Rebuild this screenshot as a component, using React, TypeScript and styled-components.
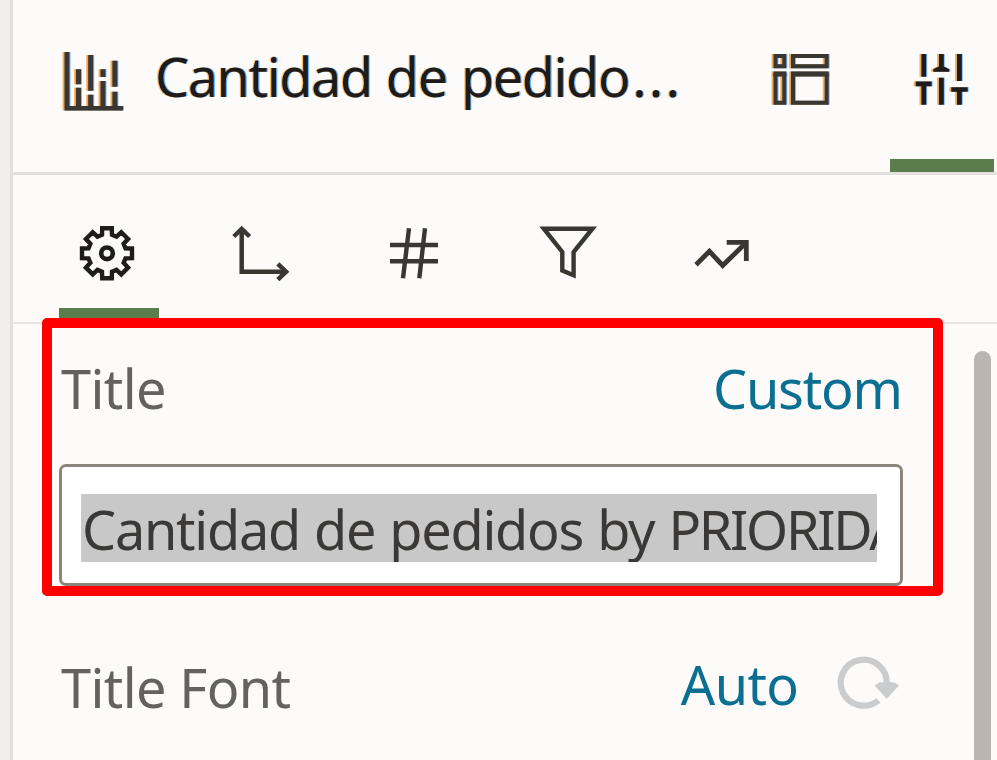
import React from "react";
import styled, { createGlobalStyle } from "styled-components";

const GlobalStyle = createGlobalStyle`
  html, body { margin: 0; padding: 0; }
  body { background: #fcfbfa; overflow: hidden; }
  * { box-sizing: border-box; }
`;

const Page = styled.div`
  position: relative;
  display: flex;
  width: 997px;
  height: 760px;
  overflow: hidden;
  background: #fcfbfa;
  font-family: "Noto Sans", "Open Sans", sans-serif;
  font-size: 54px;
  line-height: 74px;
  white-space: nowrap;
`;

const Gutter = styled.div`
  flex: none;
  width: 13px;
  background: #f0efee;
  border-right: 3px solid #e1e0df;
`;

const Panel = styled.main`
  flex: 1;
  display: flex;
  flex-direction: column;
  min-width: 0;
`;

const Header = styled.header`
  display: grid;
  grid-template-columns: 142px 594px 141px 107px;
  height: 175px;
  border-bottom: 3px solid #e2e1e0;
`;

const HeaderIcon = styled.div<{ $left: number }>`
  padding: 46px 0 0 ${(p) => p.$left}px;
`;

const HeaderTab = styled.div`
  display: flex;
  flex-direction: column;
  justify-content: space-between;
  width: 104px;
  padding-top: 46px;
`;

const HeaderTabIcon = styled.div`
  padding-left: 20px;
`;

const Underline = styled.div<{ $height: number }>`
  height: ${(p) => p.$height}px;
  background: #5b7d4b;
`;

const Heading = styled.h1`
  margin: 0;
  padding-top: 39px;
  font: inherit;
  color: #1d1b1c;
  letter-spacing: -1.4px;
  word-spacing: 1.5px;
  text-shadow: -1.2px 0 0.5px rgba(255, 150, 20, 0.65), 1.2px 0 0.5px rgba(20, 140, 255, 0.65);
`;

const Ellipsis = styled.span`
  padding-left: 3px;
  letter-spacing: 2.2px;
`;

const Tabs = styled.nav`
  display: flex;
  gap: 53px;
  height: 149px;
  padding-left: 46px;
  border-bottom: 2px solid #e6e5e4;
`;

const Tab = styled.div`
  display: flex;
  flex-direction: column;
  justify-content: space-between;
  width: 100px;
  padding-top: 43px;
`;

const TabIcon = styled.div`
  display: flex;
  justify-content: center;
`;

const Glyph = styled.svg<{ $fringe?: boolean }>`
  display: block;
  overflow: visible;
  filter: ${(p) =>
    p.$fringe
      ? "drop-shadow(-1.3px 0 0.3px rgba(255,150,30,.7)) drop-shadow(1.3px 0 0.3px rgba(40,140,255,.6))"
      : "none"};
`;

const Body = styled.div`
  flex: 1;
  display: flex;
  justify-content: space-between;
  padding: 27px 6px 0 46px;
`;

const Form = styled.section`
  width: 844px;
`;

const Row = styled.div`
  display: flex;
  justify-content: space-between;
  height: 113px;
`;

const Label = styled.span`
  padding-left: 2px;
  color: #64615e;
  letter-spacing: -0.6px;
`;

const Value = styled.span<{ $track: number }>`
  margin-right: ${(p) => -p.$track}px;
  color: #0a6f91;
  letter-spacing: ${(p) => p.$track}px;
`;

const Field = styled.div`
  height: 122px;
  padding: 27px 23px 0 19px;
  border: 3px solid #8c857d;
  border-radius: 7px;
  background: #fff;
`;

const Selected = styled.div`
  height: 68px;
  line-height: 70px;
  padding-left: 1px;
  overflow: hidden;
  background: #c8c8c8;
  color: #3a3937;
  letter-spacing: -1.25px;
  word-spacing: 1.3px;
`;

const Capitals = styled.span`
  letter-spacing: -2.3px;
`;

const FontRow = styled.div`
  display: flex;
  justify-content: space-between;
  padding-top: 64px;
`;

const FontValue = styled.div`
  display: flex;
  gap: 38px;
  margin-top: -3px;
  padding-right: 4px;
`;

const ResetIcon = styled.div`
  padding-top: 8px;
`;

const Scrollbar = styled.div`
  width: 17px;
  background: #bab5b1;
  border-radius: 9px 9px 0 0;
`;

const Callout = styled.div`
  position: absolute;
  left: 42px;
  top: 318px;
  width: 901px;
  height: 278px;
  border: 10px solid #ff0000;
  border-radius: 5px;
`;

const ink = "#3a3632";

const ChartIcon = () => (
  <Glyph $fringe width="64" height="66" viewBox="62 46 64 66" fill={ink}>
    <path d="M64.5 52h5v54h53.5v4.5H64.5z" />
    <path d="M76 69.3h5v15h-5zM76 87.7h5v19h-5zM88.2 55h5v35.7h-5zM88.2 94.7h5v12h-5zM100.5 69.3h5v7.6h-5zM100.5 81h5v26h-5zM112.4 60.7h5v26h-5zM112.4 91.7h5v15h-5z" />
  </Glyph>
);

const LayoutIcon = () => (
  <Glyph $fringe width="60" height="60" viewBox="771 46 60 60" fill="none" stroke={ink} strokeWidth="4">
    <path d="M775.5 56h8.8v10.3h-8.8zM793 56h33.7v10.3H793zM775.5 73.5h8.8v29.2h-8.8zM793 73.5h33.7v29.2H793z" />
    <path d="M773.5 75h12.8M791 75h37.7" strokeWidth="3" />
  </Glyph>
);

const SlidersIcon = () => (
  <Glyph $fringe width="62" height="60" viewBox="910 46 62 60" fill="#1d1b1c">
    <path d="M921.4 54h4.8v22.7h-4.8zM915.7 81.5h16v4.8h-5.5v18.4h-4.8V86.3h-5.7z" />
    <path d="M939 54h4.8v12.5l5.5 2.8v2.5h-16v-2.5l5.7-2.8zM939 77.7h4.8v27H939z" />
    <path d="M957 54h4.8v27H957zM951.3 87.3h16.4v4.4h-5.9v13H957v-13h-5.7z" />
  </Glyph>
);

const teeth = Array.from({ length: 8 }, (_, i) => {
  const a = (i * Math.PI) / 4;
  return [[-5, -18.5], [-4.8, -25], [4.8, -25], [5, -18.5]]
    .map(([x, y]) =>
      `${(x * Math.cos(a) - y * Math.sin(a)).toFixed(2)},${(x * Math.sin(a) + y * Math.cos(a)).toFixed(2)}`
    )
    .join(" ");
}).join(" ");

const GearIcon = () => (
  <Glyph width="60" height="60" viewBox="-28 -35.3 60 60" fill="none" stroke="#1f1d1b" strokeWidth="4.4">
    <polygon points={teeth} />
    <circle r="5.8" strokeWidth="4.6" />
  </Glyph>
);

const AxesIcon = () => (
  <Glyph width="60" height="60" viewBox="232 218 60 60" fill="none" stroke={ink} strokeWidth="4.5">
    <path d="M241.7 229v42.7H286" />
    <path d="M233.8 236.5l7.9-7.6 7.9 7.6M277.8 263.8l8.3 7.9-8.3 8" />
  </Glyph>
);

const HashIcon = () => (
  <Glyph width="60" height="60" viewBox="385 218 60 60" fill="none" stroke={ink} strokeWidth="4.4">
    <path d="M390 245h48M390 261.3h48M409 228.3l-6 50M425 228.3l-5.7 50" />
  </Glyph>
);

const FunnelIcon = () => (
  <Glyph width="60" height="60" viewBox="538 218 60 60" fill="none" stroke={ink} strokeWidth="4.4">
    <path d="M543.8 228.7h48.6L573.6 252v23.2l-11.3-4.7V252z" />
  </Glyph>
);

const TrendIcon = () => (
  <Glyph width="60" height="60" viewBox="691 218 60 60" fill="none" stroke={ink} strokeWidth="4.8">
    <path d="M696 264.8l13.4-13.5 13.3 14.2 23.6-23" />
    <path d="M726.7 242.3h19.6v18.8" />
  </Glyph>
);

const RefreshIcon = () => (
  <Glyph width="62" height="60" viewBox="837 655 62 60">
    <path d="M878.5 700.3A23 23 0 1 1 886.7 684" fill="none" stroke="#cacccd" strokeWidth="6.2" />
    <path d="M874.5 685.5l5-3.2h14.6l5 3.2-12.4 13.2z" fill="#cacccd" />
  </Glyph>
);

const tabs = [GearIcon, AxesIcon, HashIcon, FunnelIcon, TrendIcon];

export default function App() {
  return (
    <>
      <GlobalStyle />
      <Page>
        <Gutter />
        <Panel>
          <Header>
            <HeaderIcon $left={49}><ChartIcon /></HeaderIcon>
            <Heading>Cantidad de pedido<Ellipsis>...</Ellipsis></Heading>
            <HeaderIcon $left={22}><LayoutIcon /></HeaderIcon>
            <HeaderTab>
              <HeaderTabIcon><SlidersIcon /></HeaderTabIcon>
              <Underline $height={13} />
            </HeaderTab>
          </Header>
          <Tabs>
            {tabs.map((Icon, i) => (
              <Tab key={i}>
                <TabIcon><Icon /></TabIcon>
                {i === 0 && <Underline $height={14} />}
              </Tab>
            ))}
          </Tabs>
          <Body>
            <Form>
              <Row>
                <Label>Title</Label>
                <Value $track={-1.2}>Custom</Value>
              </Row>
              <Field>
                <Selected>Cantidad de pedidos by <Capitals>PRIORIDAD</Capitals></Selected>
              </Field>
              <FontRow>
                <Label>Title Font</Label>
                <FontValue>
                  <Value $track={-0.6}>Auto</Value>
                  <ResetIcon><RefreshIcon /></ResetIcon>
                </FontValue>
              </FontRow>
            </Form>
            <Scrollbar />
          </Body>
        </Panel>
        <Callout />
      </Page>
    </>
  );
}
